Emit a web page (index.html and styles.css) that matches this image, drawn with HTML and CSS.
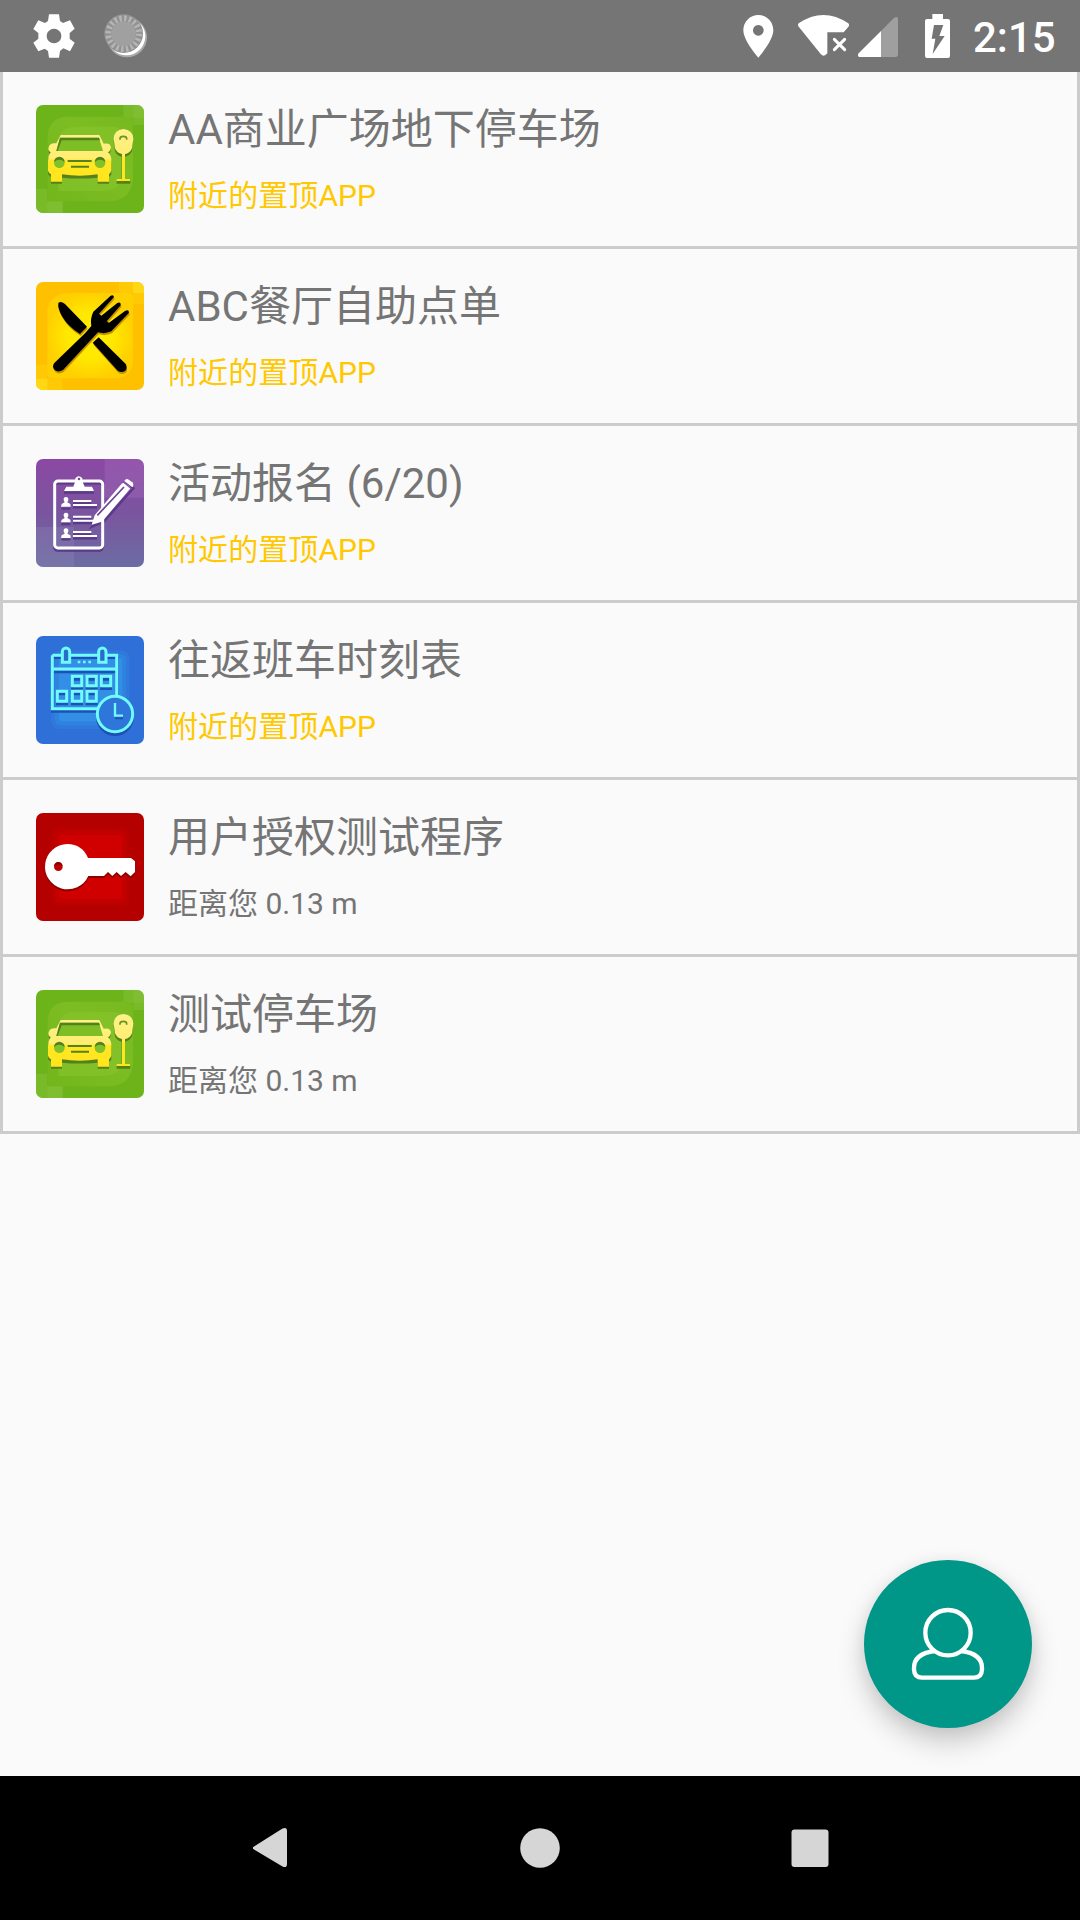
FILE: index.html
```html
<!DOCTYPE html>
<html lang="zh-CN">
<head>
<meta charset="utf-8">
<title>附近的应用</title>
<link rel="stylesheet" href="styles.css">
</head>
<body>
<svg class="defs" width="0" height="0" aria-hidden="true">
  <defs>
    <linearGradient id="greenIn" x1="0" y1="1" x2="1" y2="0">
      <stop offset="0" stop-color="#72b61c"/><stop offset=".6" stop-color="#7dbd24"/><stop offset="1" stop-color="#76b91f"/>
    </linearGradient>
    <linearGradient id="carFill" x1="0" y1="0" x2="0" y2="1">
      <stop offset="0" stop-color="#fff08a"/><stop offset=".5" stop-color="#ffee70"/><stop offset=".56" stop-color="#ffe722"/><stop offset="1" stop-color="#ffe51c"/>
    </linearGradient>
    <radialGradient id="yellowIn">
      <stop offset="0" stop-color="#fff000"/><stop offset=".55" stop-color="#ffe800"/><stop offset="1" stop-color="#ffd000"/>
    </radialGradient>
    <linearGradient id="purple" x1="0" y1="0" x2="0" y2="1">
      <stop offset="0" stop-color="#8b48a3"/><stop offset=".5" stop-color="#7a559f"/><stop offset="1" stop-color="#6c6ca3"/>
    </linearGradient>
    <symbol id="parking" viewBox="48 45 324 324">
      <rect x="48" y="45" width="324" height="324" fill="#6db31a"/>
      <path d="M310 45h62v60h-32V84h-30zM48 296h34v38h46v35H48z" fill="#7fbd31" opacity=".7"/>
      <path d="M340 45h32v38h-32zM82 334h46v35H82z" fill="#8bc63f" opacity=".35"/>
      <path d="M140 80H325Q338 82 339 96V260Q336 330 270 334H92Q83 334 83 320V140Q84 84 140 80z" fill="url(#greenIn)"/>
      <path d="M160 110H280Q308 110 308 140V250Q308 300 250 303H115V160Q116 112 160 110z" fill="#88c52c" opacity=".55"/>
      <g fill="#55811d" transform="translate(0 6)">
        <path d="M122 136H238L251 162Q272 158 272 176Q270 185 264 188Q274 198 274 215V248L267 255V275H233V257Q180 262 126 257V275H93V255L84 247V213Q84 197 92 188Q84 183 86 173Q90 158 109 161z"/>
        <path d="M310 118Q339 120 339 148L336 178Q329 193 315 194V267H331V275H290V267H305V194Q291 192 285 178L281 148Q282 120 310 118z"/>
      </g>
      <path fill="url(#carFill)" d="M122 135H238L251 161Q272 157 273 173Q271 183 264 187Q275 197 274 214V242Q270 250 267 253V275H233V253Q180 261 126 253V275H93V253Q86 249 84 242V213Q84 197 92 187Q83 182 86 172Q90 157 109 160z"/>
      <path d="M120 143L109 183H249L237 143z" fill="#7dbe25"/>
      <circle cx="118" cy="218" r="16" fill="#81c12c"/>
      <circle cx="240" cy="218" r="16" fill="#81c12c"/>
      <path d="M120 143H237L240 151H125L113 183H109zM143 210H215V216H143zM153 227H207V233H153z" fill="#55811d"/>
      <path d="M102 216a16 16 0 0 1 32 0q-16-14-32 0zM224 216a16 16 0 0 1 32 0q-16-14-32 0z" fill="#55811d"/>
      <path fill="url(#carFill)" d="M310 117Q339 120 340 146L336 175Q329 191 315 192V267H330V273H290V267H306V192Q291 190 285 175L281 146Q282 120 310 117z"/>
      <path d="M300 149V146a10 7 0 0 1 20 0V149" fill="none" stroke="#6d941e" stroke-width="5"/>
    </symbol>
  </defs>
</svg>

<div class="screen">
  <header class="status">
    <div class="status-left">
      <svg width="180" height="72" viewBox="0 0 540 216">
        <path fill="#fff" fill-rule="evenodd" d="M147 43H177L180 63L189 69L210 61L224 86L209 99V116L224 128L210 154L190 145L180 153L177 173H147L144 153L134 146L115 154L100 128L115 116V99L100 87L115 61L135 69L144 63zM162 86a22 22 0 1 0 .1 0z"/>
        <circle cx="381" cy="112" r="60" fill="#aaa"/>
        <circle cx="379" cy="109" r="57" fill="#fff"/>
        <circle cx="371" cy="101" r="58" fill="#929292"/>
        <circle cx="371" cy="101" r="46" fill="none" stroke="#b5b5b5" stroke-width="18" stroke-dasharray="7.2 7.25"/>
        <circle cx="371" cy="101" r="37" fill="#a0a0a0"/>
      </svg>
    </div>
    <div class="status-right">
      <svg width="240" height="72" viewBox="0 0 720 216">
        <path fill="#fff" fill-rule="evenodd" d="M115 45C90 45 70 65 70 91C70 122 115 173 115 173S160 122 160 91C160 65 140 45 115 45zM115 75a16 16 0 1 1-.1 0z"/>
        <path fill="#fff" d="M236 70Q310 20 385 70Q390 75 384 82L371 97H322V160Q312 173 302 162L235 79Q232 74 236 70z"/>
        <path d="M343 118L374 149M374 118L343 149" stroke="#fff" stroke-width="9" stroke-linecap="round"/>
        <path fill="#9f9f9f" d="M483 93L522 54Q534 46 534 57V164Q534 171 527 171H483z"/>
        <path fill="#fff" d="M483 93V171H418Q411 169 416 160z"/>
        <path fill="#fff" d="M637 42H669V57H684Q690 57 690 63V168Q690 174 684 174H621Q615 174 615 168V63Q615 57 621 57H637z"/>
        <path fill="#757575" d="M642 75H670L658 108H674L638 162L646 116H635z"/>
      </svg>
      <span class="clock">2:15</span>
    </div>
  </header>

  <main class="content">
    <ul class="list">
      <li class="item">
        <svg class="icon"><use href="#parking"/></svg>
        <div class="text"><div class="title">AA商业广场地下停车场</div><div class="sub pinned">附近的置顶APP</div></div>
      </li>
      <li class="item">
        <svg class="icon" viewBox="48 36 324 324">
          <rect x="48" y="36" width="324" height="324" fill="#ffc000"/>
          <path d="M297 36H372V102H339V69H297zM48 284H82V326H127V360H48z" fill="#ffc906"/>
          <path d="M339 36H372V69H339zM48 326H82V360H48z" fill="#ffd815"/>
          <path d="M150 69H328Q339 70 339 82V270Q338 322 285 325H95Q82 325 82 310V125Q84 72 150 69z" fill="url(#yellowIn)"/>
          <g>
            <g fill="#c79400" transform="translate(2 6)">
              <path d="M115 99Q122 92 135 102L201 170L180 192Q145 170 127 140Q112 115 115 99zM218 218L236 202L318 283Q322 296 316 302Q305 310 293 302z"/>
              <path d="M103 279L195 190L214 168Q210 145 220 125L271 78Q280 72 282 81L237 131L244 137L292 99Q303 94 302 106L260 154L267 158L315 123Q327 117 327 128L274 184Q255 193 234 187L129 300Q114 309 103 299Q95 289 103 279z"/>
            </g>
            <path d="M115 99Q122 92 135 102L201 170L180 192Q145 170 127 140Q112 115 115 99zM218 218L236 202L318 283Q322 296 316 302Q305 310 293 302z"/>
            <path d="M103 279L195 190L214 168Q210 145 220 125L271 78Q280 72 282 81L237 131L244 137L292 99Q303 94 302 106L260 154L267 158L315 123Q327 117 327 128L274 184Q255 193 234 187L129 300Q114 309 103 299Q95 289 103 279z"/>
          </g>
        </svg>
        <div class="text"><div class="title">ABC餐厅自助点单</div><div class="sub pinned">附近的置顶APP</div></div>
      </li>
      <li class="item">
        <svg class="icon" viewBox="48 42 324 324">
          <rect x="48" y="42" width="324" height="324" fill="url(#purple)"/>
          <path d="M254 42H372V158H254z" fill="#a36bbb" opacity=".4"/>
          <path d="M48 246H162V366H48z" fill="#9890bd" opacity=".25"/>
          <g transform="translate(0 7)" fill="none" stroke="#593989" stroke-width="7">
            <rect x="103" y="108" width="145" height="202" rx="10"/>
            <path d="M159 168H214M159 180H231M159 215H214M159 227H220M159 261H214M159 273H231"/>
            <path d="M132 136H222M216 238L238 205L319 111L340 123L253 221zM124 184H151M124 230H151M124 276H151"/>
          </g>
          <rect x="104" y="108" width="144" height="201" rx="10" fill="none" stroke="#fff" stroke-width="9"/>
          <path d="M139 125H160L166 108V100Q176 88 187 100V108L194 125H216L222 138H132z" fill="#fff"/>
          <circle cx="177" cy="102" r="4" fill="#764b99"/>
          <path d="M159 168H214M159 180H231M159 215H214M159 227H231M159 261H214M159 273H231" stroke="#fff" stroke-width="6"/>
          <g fill="#fff">
            <path id="person" d="M138 156Q146 156 145 165L142 172L151 177L152 185H123L125 177L134 172L131 165Q130 156 138 156z"/>
            <use href="#person" y="47"/><use href="#person" y="94"/>
            <path d="M215 239L224 211L305 116Q311 111 319 117L329 124Q333 130 327 135L246 230z"/>
            <path d="M313 108Q318 100 324 103L337 112Q343 119 337 127z"/>
          </g>
          <path d="M232 211L312 126" stroke="#6a4396" stroke-width="5"/>
          <path d="M308 109L335 132" stroke="#8650a3" stroke-width="4"/>
        </svg>
        <div class="text"><div class="title">活动报名 (6/20)</div><div class="sub pinned">附近的置顶APP</div></div>
      </li>
      <li class="item">
        <svg class="icon" viewBox="48 48 324 324">
          <rect x="48" y="48" width="324" height="324" fill="#2f70d8"/>
          <rect x="94" y="92" width="234" height="235" rx="24" fill="#3079dc"/>
          <rect x="104" y="102" width="214" height="214" rx="16" fill="#2f82e0"/>
          <rect x="117" y="114" width="190" height="190" rx="10" fill="#328fe5"/>
          <g fill="none" stroke="#1e50b5" stroke-width="8" transform="translate(0 8)">
            <path d="M97 105H291V225M97 148H291M97 105V266H235"/>
            <path d="M157 170h28v28h-28zM201 170h28v28h-28zM244 170h28v28h-28zM112 214h28v30h-28zM157 214h28v30h-28zM201 214h28v30h-28z"/>
            <circle cx="285" cy="283" r="53"/>
          </g>
          <path d="M97 106H290V228M97 106V266H234M97 147H290" fill="none" stroke="#70fbff" stroke-width="9"/>
          <path d="M127 127V95a11 11 0 0 1 22 0V127zM236 127V95a11 11 0 0 1 22 0V127z" fill="#296acb" stroke="#70fbff" stroke-width="9"/>
          <path d="M173 126h8M189 126h8M205 126h8" stroke="#70fbff" stroke-width="7"/>
          <path d="M157 169h28v28h-28zM201 169h28v28h-28zM244 169h28v28h-28zM112 214h28v30h-28zM157 214h28v30h-28zM201 214h28v30h-28z" fill="none" stroke="#70fbff" stroke-width="9"/>
          <circle cx="285" cy="282" r="53" fill="#2f76da" stroke="#70fbff" stroke-width="9"/>
          <path d="M286 295H309" stroke="#1e50b5" stroke-width="6"/>
          <path d="M285 249V287H309" fill="none" stroke="#70fbff" stroke-width="7"/>
        </svg>
        <div class="text"><div class="title">往返班车时刻表</div><div class="sub pinned">附近的置顶APP</div></div>
      </li>
      <li class="item">
        <svg class="icon" viewBox="48 39 324 324">
          <rect x="48" y="39" width="324" height="324" fill="#b50000"/>
          <rect x="94" y="84" width="234" height="235" rx="24" fill="#bb0000"/>
          <rect x="104" y="94" width="214" height="214" rx="16" fill="#c30000"/>
          <rect x="117" y="106" width="190" height="190" rx="10" fill="#d00000"/>
          <path d="M142 138A68 68 0 1 0 205 234H252L264 223L277 234L290 223L303 234L317 223L332 235L345 222V190L332 180H204Q187 138 142 138z" fill="#8d0000"/>
          <path fill="#fff" d="M142 132A68 68 0 1 0 205 228H252L264 216L277 228L290 216L303 228L317 216L332 229L345 216V184L333 174H204Q187 133 142 132z"/>
          <circle cx="115" cy="200" r="13" fill="#c00000"/>
          <path d="M102 199a13 13 0 0 1 26 0q-13-12-26 0z" fill="#8d0000"/>
        </svg>
        <div class="text"><div class="title">用户授权测试程序</div><div class="sub">距离您 0.13 m</div></div>
      </li>
      <li class="item">
        <svg class="icon"><use href="#parking"/></svg>
        <div class="text"><div class="title">测试停车场</div><div class="sub">距离您 0.13 m</div></div>
      </li>
    </ul>
    <button class="fab" aria-label="我的">
      <svg width="168" height="168" viewBox="72 60 504 504" fill="none" stroke="#fff" stroke-width="13">
        <circle cx="324" cy="278" r="68"/>
        <path d="M284 333Q222 341 222 384V389Q223 413 246 413H402Q425 413 426 389V384Q426 341 364 333"/>
      </svg>
    </button>
  </main>

  <nav class="nav">
    <svg width="90" height="60" viewBox="0 0 90 60"><path d="M29 28.500L57.500 10.500Q62 8.500 62 13V46Q62 50.500 57.500 48.500L29 31.500Q26.500 30 29 28.500z" fill="#d6d6d6"/></svg>
    <svg width="90" height="60" viewBox="0 0 90 60"><circle cx="45" cy="30" r="19.800" fill="#d6d6d6"/></svg>
    <svg width="90" height="60" viewBox="0 0 90 60"><rect x="26.500" y="11.500" width="37" height="37.500" rx="3" fill="#d6d6d6"/></svg>
  </nav>
</div>
</body>
</html>
```
FILE: styles.css
```css
* { box-sizing: border-box; }

body {
  margin: 0;
  background: #fafafa;
  font-family: Roboto, "Noto Sans CJK SC", sans-serif;
  color: #757575;
}

.defs { position: absolute; }

.screen {
  display: flex;
  flex-direction: column;
  width: 1080px;
  height: 1920px;
}

.status {
  display: flex;
  justify-content: space-between;
  height: 72px;
  background: #757575;
}

.status svg { display: block; }

.status-right {
  display: flex;
  width: 360px;
}

.clock {
  padding-left: 13px;
  color: #fff;
  font-size: 42px;
  font-weight: 500;
  line-height: 76px;
}

.content {
  position: relative;
  flex: 1;
}

.list {
  margin: 0;
  padding: 0;
  list-style: none;
  border: solid #ccc;
  border-width: 0 3px;
}

.item {
  display: flex;
  height: 177px;
  padding: 0 33px;
  border-bottom: 3px solid #ccc;
}

.icon {
  width: 108px;
  height: 108px;
  margin-top: 33px;
  border-radius: 7px;
}

.text { padding: 30px 0 0 24px; }

.title {
  font-size: 42px;
  line-height: 56px;
}

.sub {
  margin-top: 18px;
  font-size: 30px;
  line-height: 40px;
}

.pinned {
  color: #ffc800;
  letter-spacing: .08px;
}

.fab {
  position: absolute;
  right: 48px;
  bottom: 48px;
  width: 168px;
  height: 168px;
  padding: 0;
  border: 0;
  border-radius: 50%;
  background: #009688;
  box-shadow: 0 14px 28px rgba(0, 0, 0, .2), 0 2px 16px rgba(0, 0, 0, .06);
}

.fab svg { display: block; }

.nav {
  display: flex;
  justify-content: center;
  gap: 180px;
  height: 144px;
  padding-top: 42px;
  background: #000;
}
```
